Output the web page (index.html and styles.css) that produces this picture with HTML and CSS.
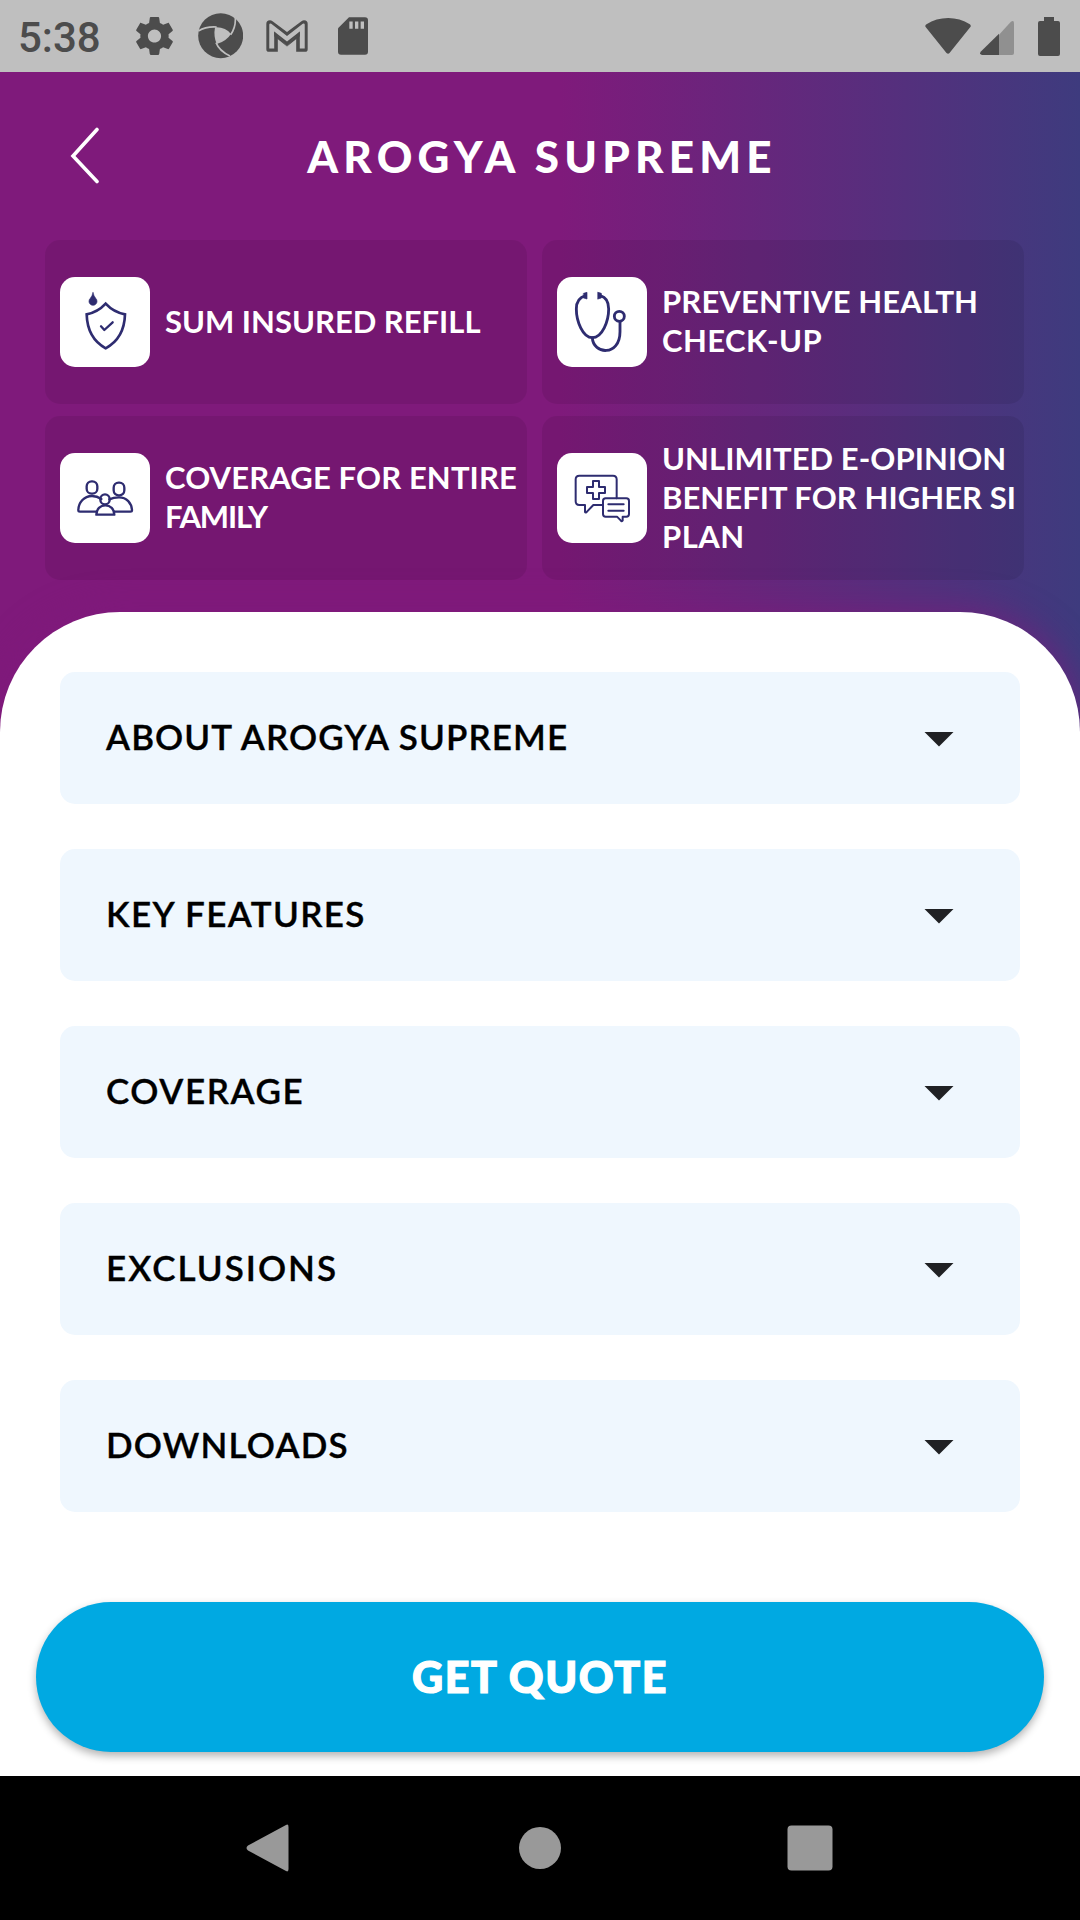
FILE: index.html
```html
<!DOCTYPE html>
<html lang="en">
<head>
<meta charset="utf-8">
<title>Arogya Supreme</title>
<link rel="stylesheet" href="styles.css">
</head>
<body>
<div class="status">
  <span class="time">5:38</span>
  <div class="status-left">
    <svg width="37" height="38" viewBox="2.2 2 19.6 20"><path d="M19.43 12.98c.04-.32.07-.64.07-.98s-.03-.66-.07-.98l2.11-1.65c.19-.15.24-.42.12-.64l-2-3.46c-.12-.22-.39-.3-.61-.22l-2.49 1c-.52-.4-1.08-.73-1.69-.98l-.38-2.65C14.46 2.18 14.25 2 14 2h-4c-.25 0-.46.18-.49.42l-.38 2.65c-.61.25-1.17.59-1.69.98l-2.49-1c-.23-.09-.49 0-.61.22l-2 3.46c-.13.22-.07.49.12.64l2.11 1.65c-.04.32-.07.65-.07.98s.03.66.07.98l-2.11 1.65c-.19.15-.24.42-.12.64l2 3.46c.12.22.39.3.61.22l2.49-1c.52.4 1.08.73 1.69.98l.38 2.65c.03.24.24.42.49.42h4c.25 0 .46-.18.49-.42l.38-2.65c.61-.25 1.17-.59 1.69-.98l2.49 1c.23.09.49 0 .61-.22l2-3.46c.12-.22.07-.49-.12-.64l-2.11-1.65zM12 15.5c-1.93 0-3.5-1.57-3.5-3.5s1.57-3.5 3.5-3.5 3.5 1.57 3.5 3.5-1.57 3.5-3.5 3.5z"/></svg>
    <svg width="45" height="46" viewBox="594 41 135 138"><circle cx="662" cy="109" r="67.500"/><path class="cut" d="M645 84Q676 82 693 104Q678 127 650 134Q640 110 645 84Z"/><path class="slit" d="M595 95Q618 81 650 83M705 48Q710 80 692 106M648 130Q658 155 690 170"/></svg>
    <svg width="42" height="34" viewBox="797 55 128 100"><path d="M798 68Q798 57 809 57Q813 57 817 60L861 93L905 60Q909 57 913 57Q924 57 924 68V145Q924 153 916 153H889V106L861 135L833 106V153H806Q798 153 798 145Z"/><path class="cut" d="M807 70Q808 65 813 68L861 105L909 68Q914 65 915 70V143H900V91L861 122L822 91V143H807Z"/><path d="M822 91L861 135L900 91V106L861 137L822 106Z"/></svg>
    <svg width="30" height="38" viewBox="1014 51 90 113"><path d="M1047 51H1095Q1104 51 1104 60V155Q1104 164 1095 164H1023Q1014 164 1014 155V84Z"/><path class="cut" d="M1048 64h10v22h-10zM1065 64h10v22h-10zM1082 64h10v22h-10z"/></svg>
  </div>
  <div class="status-right">
    <svg width="46" height="36" viewBox="137 51 137 108"><path d="M139 79Q135 74 141 70Q170 51 206 51Q241 51 271 70Q276 74 272 79L210 156Q206 161 201 156Z"/></svg>
    <svg width="34" height="34" viewBox="300 60 102 102"><path d="M357 101L392 63Q402 56 402 67V156Q402 162 396 162H357Z" opacity=".4"/><path d="M357 98V162H306Q297 160 302 152Z"/></svg>
    <svg width="22" height="39" viewBox="474 48 66 117"><path d="M492 48H522V60H534Q540 60 540 66V159Q540 165 534 165H480Q474 165 474 159V66Q474 60 480 60H492Z"/></svg>
  </div>
</div>

<header class="hero">
  <div class="titlebar">
    <svg class="back" width="30" height="58" viewBox="0 0 30 58"><path d="M27 2.500L3 29L27 54.500"/></svg>
    <h1>AROGYA SUPREME</h1>
  </div>
  <div class="features">
    <div class="feature">
      <span class="tile"><svg viewBox="0 0 270 270"><path stroke-width="8" stroke-linejoin="miter" d="M137 80Q113 106 80 112Q82 184 137 214Q193 184 195 112Q161 106 137 80Z"/><path stroke-width="7" d="M123 148L133 159L158 136"/><path class="solid" d="M99 47Q101 56 107 64A12 12 0 1 1 91 64Q97 56 99 47Z"/></svg></span>
      <p><span>SUM INSURED REFILL</span></p>
    </div>
    <div class="feature">
      <span class="tile"><svg viewBox="0 0 270 270"><path stroke-width="8.500" d="M86 56C67 61 58 76 58 96C58 132 77 182 106 182C136 182 155 132 155 96C155 76 148 61 130 56"/><path stroke-width="8.500" d="M106 182C108 233 189 239 189 164V136"/><circle cx="187" cy="118" r="15" stroke-width="8.500"/><path class="solid" d="M80 49L90 46V66L80 63ZM123 46L133 49V63L123 66Z"/></svg></span>
      <p><span class="ls-s">PREVENTIVE HEALTH</span><span class="ls-m">CHECK-UP</span></p>
    </div>
    <div class="feature">
      <span class="tile"><svg viewBox="0 0 270 270" stroke-width="7"><rect x="80" y="85" width="32" height="37" rx="15"/><rect x="161" y="89" width="32" height="38" rx="15"/><path d="M124 138Q111 129 96 129C72 129 55 149 55 172Q55 176 60 176H108M148 139Q160 133 177 133C200 133 215 150 216 172Q216 176 211 176H164"/><rect x="121" y="124" width="28" height="30" rx="14"/><path d="M109 185H163C163 168 151 157 136 157C121 157 109 168 109 185Z"/></svg></span>
      <p><span class="ls-s">COVERAGE FOR ENTIRE</span><span class="ls-tight">FAMILY</span></p>
    </div>
    <div class="feature">
      <span class="tile"><svg viewBox="0 0 270 270" stroke-width="6"><path d="M179 136V79Q179 68 168 68H67Q56 68 56 79V145Q56 156 67 156H84V177Q86 181 90 176L109 156H138"/><path d="M108 84H126V102H144V120H126V138H108V120H90V102H108Z"/><path d="M146 136H208Q216 136 216 144V183Q216 191 208 191H197V203Q195 207 191 202L180 191H146Q138 191 138 183V144Q138 136 146 136ZM154 154H200M154 173H200"/></svg></span>
      <p><span class="ls-xs">UNLIMITED E-OPINION</span><span class="ls-xs">BENEFIT FOR HIGHER SI</span><span class="ls-m">PLAN</span></p>
    </div>
  </div>
</header>

<main class="sheet">
  <div class="row"><span class="r1">ABOUT AROGYA SUPREME</span><i class="caret"></i></div>
  <div class="row"><span class="r2">KEY FEATURES</span><i class="caret"></i></div>
  <div class="row"><span class="r3">COVERAGE</span><i class="caret"></i></div>
  <div class="row"><span class="r4">EXCLUSIONS</span><i class="caret"></i></div>
  <div class="row"><span class="r5">DOWNLOADS</span><i class="caret"></i></div>
  <button class="quote">GET QUOTE</button>
</main>

<nav class="navbar">
  <svg viewBox="0 0 54 54"><path d="M43 4Q45.500 2.500 45.500 6V48Q45.500 51.500 43 50L5 29.500Q2 27 5 24.500Z"/></svg>
  <svg viewBox="0 0 54 54"><circle cx="27" cy="27" r="21"/></svg>
  <svg viewBox="0 0 54 54"><rect x="4.500" y="4.500" width="45" height="45" rx="4"/></svg>
</nav>
</body>
</html>
```
FILE: styles.css
```css
* { box-sizing: border-box; }
body {
  margin: 0;
  width: 1080px;
  height: 1920px;
  display: flex;
  flex-direction: column;
  overflow: hidden;
  font-family: Lato, "Open Sans", sans-serif;
  background: linear-gradient(90deg, #7f1a7b 0, #7f1a7b 560px, #3e3b7e 1080px);
}
svg { display: block; flex: none; }

.status {
  height: 72px;
  display: flex;
  align-items: center;
  padding: 0 20px 0 18px;
  background: #bfbfbf;
  fill: #4c4c4c;
  color: #4c4c4c;
}
.time {
  width: 118px;
  font: 500 42px/72px Roboto, sans-serif;
  padding-top: 3px;
}
.status-left { display: flex; align-items: center; flex: 1; }
.status-left svg:nth-child(2) { margin: 0 23px 0 25px; }
.status-left svg:nth-child(3) { margin-right: 30px; }
.status-right { display: flex; align-items: center; }
.status-right svg:nth-child(2) { margin: 3px 24px 0 9px; }
.cut { fill: #bfbfbf; }
.slit { fill: none; stroke: #bfbfbf; stroke-width: 5; }

.hero { height: 540px; padding: 0 45px; }
.titlebar { height: 168px; position: relative; display: flex; justify-content: center; align-items: center; }
.back {
  position: absolute;
  left: 25px;
  top: 55px;
  fill: none;
  stroke: #fff;
  stroke-width: 3.6;
  stroke-linecap: round;
}
h1 {
  margin: 0;
  color: #fff;
  font-size: 44px;
  line-height: 60px;
  font-weight: 900;
  letter-spacing: 5.2px;
  padding-left: 4px;
}
.features {
  display: grid;
  grid-template-columns: 482px 482px;
  grid-auto-rows: 164px;
  gap: 12px 15px;
}
.feature {
  display: flex;
  align-items: center;
  gap: 15px;
  padding-left: 15px;
  border-radius: 15px;
  background: rgba(0, 0, 0, .08);
}
.tile { width: 90px; height: 90px; border-radius: 15px; background: #fff; flex: none; }
.tile svg {
  width: 90px;
  height: 90px;
  fill: none;
  stroke: #2e2c70;
  stroke-linecap: round;
  stroke-linejoin: round;
}
.tile .solid { fill: #2e2c70; stroke: #2e2c70; stroke-width: 2; }
.feature p {
  margin: 0;
  padding-bottom: 2px;
  color: #fff;
  font-size: 31px;
  font-weight: 700;
  line-height: 39px;
  white-space: nowrap;
}
.feature p span { display: block; }
.ls-xs { letter-spacing: .06px; }
.ls-s { letter-spacing: .13px; }
.ls-m { letter-spacing: .45px; }
.feature .ls-tight { letter-spacing: -1.2px; }

.sheet {
  height: 1164px;
  padding: 60px 36px 0;
  background: #fff;
  border-radius: 120px 120px 0 0;
  box-shadow: 0 0 36px rgba(128, 26, 124, .75);
  clip-path: inset(-60px 0 0 0);
}
.row {
  height: 132px;
  margin: 0 24px 45px;
  padding: 0 66px 4px 46px;
  display: flex;
  justify-content: space-between;
  align-items: center;
  border-radius: 15px;
  background: #eff7fe;
  color: #000;
  font-size: 35px;
  font-weight: 600;
  -webkit-text-stroke: .35px #000;
}
.caret {
  width: 30px;
  height: 15px;
  margin-top: 6px;
  background: #202124;
  clip-path: polygon(0 0, 100% 0, 50% 100%);
}
.r1 { letter-spacing: 1.1px; }
.r2 { letter-spacing: 1.4px; }
.r3 { letter-spacing: 1.6px; }
.r4 { letter-spacing: 2px; }
.r5 { letter-spacing: 1.2px; }
.quote {
  display: block;
  width: 1008px;
  height: 150px;
  margin-top: 90px;
  padding: 0 0 2px;
  border: 0;
  border-radius: 75px;
  background: #00a9e2;
  color: #fff;
  font-family: inherit;
  font-size: 43px;
  font-weight: 900;
  letter-spacing: 1.5px;
  -webkit-text-stroke: 1.2px #fff;
  box-shadow: 0 4px 8px rgba(0, 0, 0, .3);
}

.navbar {
  height: 144px;
  display: flex;
  justify-content: center;
  align-items: center;
  gap: 216px;
  background: #000;
  fill: #999;
}
.navbar svg { width: 54px; height: 54px; }
```
